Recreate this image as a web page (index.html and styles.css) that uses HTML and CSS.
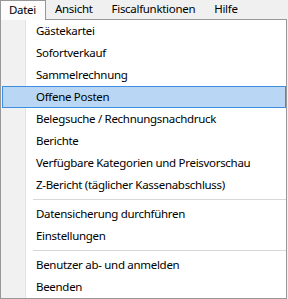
FILE: index.html
```html
<!DOCTYPE html>
<html lang="de">
<head>
    <meta charset="UTF-8">
    <title>Datei-Menü</title>
    <link rel="stylesheet" href="styles.css">
</head>
<body>
    <nav class="menubar">
        <div class="menubar-item open">Datei</div>
        <div class="menubar-item">Ansicht</div>
        <div class="menubar-item">Fiscalfunktionen</div>
        <div class="menubar-item">Hilfe</div>
    </nav>

    <ul class="dropdown">
        <li class="item">Gästekartei</li>
        <li class="item">Sofortverkauf</li>
        <li class="item">Sammelrechnung</li>
        <li class="item active">Offene Posten</li>
        <li class="item">Belegsuche / Rechnungsnachdruck</li>
        <li class="item">Berichte</li>
        <li class="item">Verfügbare Kategorien und Preisvorschau</li>
        <li class="item">Z-Bericht (täglicher Kassenabschluss)</li>
        <li class="separator"></li>
        <li class="item">Datensicherung durchführen</li>
        <li class="item">Einstellungen</li>
        <li class="separator"></li>
        <li class="item">Benutzer ab- und anmelden</li>
        <li class="item">Beenden</li>
    </ul>
</body>
</html>
```

FILE: styles.css
```css
* {
    margin: 0;
    padding: 0;
    box-sizing: border-box;
}
body {
    font-family: "Noto Sans", "Open Sans", sans-serif;
    font-size: 11.5px;
    letter-spacing: -0.3px;
    color: #000;
    background-color: #f0f0f0;
}
.menubar {
    display: flex;
    height: 19px;
}
.menubar-item {
    padding: 0 10px 0 9px;
    line-height: 18px;
    height: 19px;
}
.menubar-item.open {
    position: relative;
    z-index: 1;
    height: 20px;
    background-color: #fcfcfc;
    border: 1px solid #979797;
    border-bottom: none;
    padding: 0 9px 0 8px;
    line-height: 17px;
}
.dropdown {
    list-style: none;
    width: 287px;
    border: 1px solid #979797;
    background: linear-gradient(to right, #f1f1f1 0, #f1f1f1 24px, #e3e3e3 24px, #e3e3e3 25px, #fff 25px);
}
.item {
    height: 22px;
    line-height: 20px;
    margin-left: 1px;
    padding-left: 33px;
    border: 1px solid transparent;
    white-space: nowrap;
}
.item.active {
    background-color: #b9d7f4;
    border-color: #3c8ee0;
}
.separator {
    height: 7px;
    margin-left: 32px;
    padding-top: 3px;
}
.separator::after {
    content: "";
    display: block;
    border-top: 1px solid #d7d7d7;
}
```
